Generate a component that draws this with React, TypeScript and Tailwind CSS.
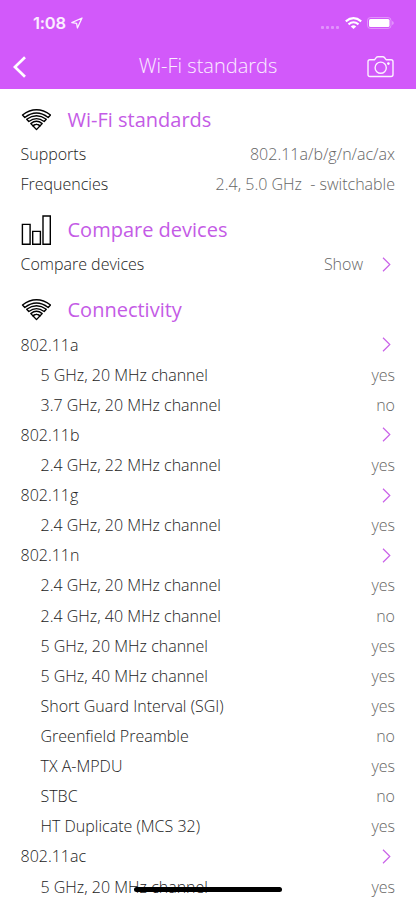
import type { ReactNode } from "react";

type RowData = {
  label: string;
  value?: string;
  nested?: boolean;
  link?: boolean;
};

const standards: RowData[] = [
  { label: "Supports", value: "802.11a/b/g/n/ac/ax" },
  { label: "Frequencies", value: "2.4, 5.0 GHz  - switchable" },
];

const compare: RowData[] = [{ label: "Compare devices", value: "Show", link: true }];

const connectivity: RowData[] = [
  { label: "802.11a", link: true },
  { label: "5 GHz, 20 MHz channel", value: "yes", nested: true },
  { label: "3.7 GHz, 20 MHz channel", value: "no", nested: true },
  { label: "802.11b", link: true },
  { label: "2.4 GHz, 22 MHz channel", value: "yes", nested: true },
  { label: "802.11g", link: true },
  { label: "2.4 GHz, 20 MHz channel", value: "yes", nested: true },
  { label: "802.11n", link: true },
  { label: "2.4 GHz, 20 MHz channel", value: "yes", nested: true },
  { label: "2.4 GHz, 40 MHz channel", value: "no", nested: true },
  { label: "5 GHz, 20 MHz channel", value: "yes", nested: true },
  { label: "5 GHz, 40 MHz channel", value: "yes", nested: true },
  { label: "Short Guard Interval (SGI)", value: "yes", nested: true },
  { label: "Greenfield Preamble", value: "no", nested: true },
  { label: "TX A-MPDU", value: "yes", nested: true },
  { label: "STBC", value: "no", nested: true },
  { label: "HT Duplicate (MCS 32)", value: "yes", nested: true },
  { label: "802.11ac", link: true },
  { label: "5 GHz, 20 MHz channel", value: "yes", nested: true },
];

function WifiOutlineIcon() {
  return (
    <svg width="30" height="22" viewBox="0 0 30 22" fill="none" stroke="#000" strokeWidth="1.35" strokeLinejoin="round">
      <path d="M1.5 6Q15.5 -4.4 29.5 6L27.2 8.5Q15.5 -0.5 3.8 8.5Z" />
      <path d="M5.7 10.2Q15.5 3.2 25.3 10.2L23.2 12.5Q15.5 6.8 7.8 12.5Z" />
      <path d="M9.8 14.6Q15.5 10 21.2 14.6L19.1 16.8Q15.5 14 11.9 16.8Z" />
      <path d="M11.9 16.8Q15.5 14 19.1 16.8L15.5 20.6Z" />
    </svg>
  );
}

function BarsIcon() {
  return (
    <svg width="30" height="30" viewBox="0 0 30 30" fill="none" stroke="#000" strokeWidth="1.4">
      <path d="M1.4 9.4h7.7v19.8H1.4zM11.7 16.4h7.7v12.8h-7.7zM22 1h7.3v28.2H22z" />
    </svg>
  );
}

function CameraIcon() {
  return (
    <svg width="27" height="22" viewBox="0 0 27 22" fill="none" stroke="#fff" strokeOpacity="0.92" strokeWidth="1.4" strokeLinejoin="round">
      <path d="M3 3.7h4.7l1.5-2Q9.9.8 11 .8h4.8q1.1 0 1.8.9l1.5 2H24q2 0 2 2v12.8q0 2-2 2H3q-2 0-2-2V5.7q0-2 2-2Z" />
      <circle cx="13.7" cy="11.7" r="5.6" />
      <circle cx="21.4" cy="7.6" r="1.3" fill="#fff" stroke="none" />
    </svg>
  );
}

function StatusBar() {
  return (
    <div className="flex h-[44px] items-start justify-between pl-[33px] pr-[22px] pt-[13px]">
      <div className="flex items-start">
        <span className="font-['Inter'] text-[16.5px] font-semibold leading-5 tracking-[-0.2px] text-white/90">1:08</span>
        <svg className="ml-[5px] mt-[4px]" width="12" height="12" viewBox="0 0 12 12" fill="none" stroke="#fff" strokeOpacity="0.9" strokeWidth="1.3" strokeLinejoin="round">
          <path d="M0.8 5.6L11 1L6.4 11L5.6 6.3Z" />
        </svg>
      </div>
      <div className="flex items-start">
        <div className="mt-[12.5px] flex gap-[2px]">
          {[0, 1, 2, 3].map((dot) => (
            <span key={dot} className="size-[3px] rounded-[1px] bg-white/35" />
          ))}
        </div>
        <svg className="ml-[6px] mt-[4px]" width="17" height="12" viewBox="0 0 17 12" fill="none" stroke="#fff" strokeWidth="2.1">
          <path d="M0.8 4.4Q8.5 -2 16.2 4.4" />
          <path d="M3.5 7.4Q8.5 3.1 13.5 7.4" />
          <path d="M5.8 9.4Q8.5 7.3 11.2 9.4L8.5 12Z" fill="#fff" stroke="none" />
        </svg>
        <svg className="ml-[5px] mt-[4px]" width="27" height="12" viewBox="0 0 27 12">
          <rect x="0.5" y="0.5" width="23.5" height="11" rx="3" fill="none" stroke="#fff" strokeOpacity="0.35" />
          <rect x="2" y="2" width="20.5" height="8" rx="1.5" fill="#fff" />
          <path d="M25.3 4q1.3.5 1.3 2t-1.3 2z" fill="#fff" fillOpacity="0.5" />
        </svg>
      </div>
    </div>
  );
}

function Chevron() {
  return (
    <svg className="mr-[4px]" width="9" height="15" viewBox="0 0 9 15" fill="none" stroke="#c962e8" strokeWidth="1.2">
      <path d="M1 0.8L7.8 7.5L1 14.2" />
    </svg>
  );
}

function Row({ label, value, nested, link }: RowData) {
  return (
    <div className={`flex h-[30.12px] items-center justify-between pr-[21px] ${nested ? "pl-[40.5px]" : "pl-[20.5px]"}`}>
      <span className="text-[#222]">{label}</span>
      <span className="flex items-center gap-[19px] whitespace-pre text-[#666]">
        {value}
        {link && <Chevron />}
      </span>
    </div>
  );
}

function Section({ icon, title, rows }: { icon: ReactNode; title: string; rows: RowData[] }) {
  return (
    <section>
      <h2 className="flex h-[50px] items-center pl-[21px] pt-[11.6px] text-xl font-normal text-[#c45be6]">
        <span className="flex w-[46.5px]">{icon}</span>
        {title}
      </h2>
      {rows.map((row, i) => (
        <Row key={i} {...row} />
      ))}
    </section>
  );
}

export default function App() {
  return (
    <div className="relative h-[900px] w-[416px] overflow-hidden bg-white font-['Open_Sans',sans-serif] text-base font-light">
      <header className="h-[89px] bg-[#d259fa]">
        <StatusBar />
        <div className="grid h-[45px] grid-cols-[1fr_auto_1fr] items-center px-[13px]">
          <svg width="14" height="22" viewBox="0 0 14 22" fill="none" stroke="#fff" strokeWidth="2.7">
            <path d="M12 1.2L1.9 11L12 20.8" />
          </svg>
          <h1 className="-mt-0.5 text-xl text-white/90">Wi-Fi standards</h1>
          <div className="flex justify-end pr-[9px]">
            <CameraIcon />
          </div>
        </div>
      </header>
      <main className="pt-[0.2px]">
        <Section icon={<WifiOutlineIcon />} title="Wi-Fi standards" rows={standards} />
        <Section icon={<BarsIcon />} title="Compare devices" rows={compare} />
        <Section icon={<WifiOutlineIcon />} title="Connectivity" rows={connectivity} />
      </main>
      <div className="absolute bottom-[8.5px] left-[134px] h-[5px] w-[148px] rounded-full bg-black" />
    </div>
  );
}
